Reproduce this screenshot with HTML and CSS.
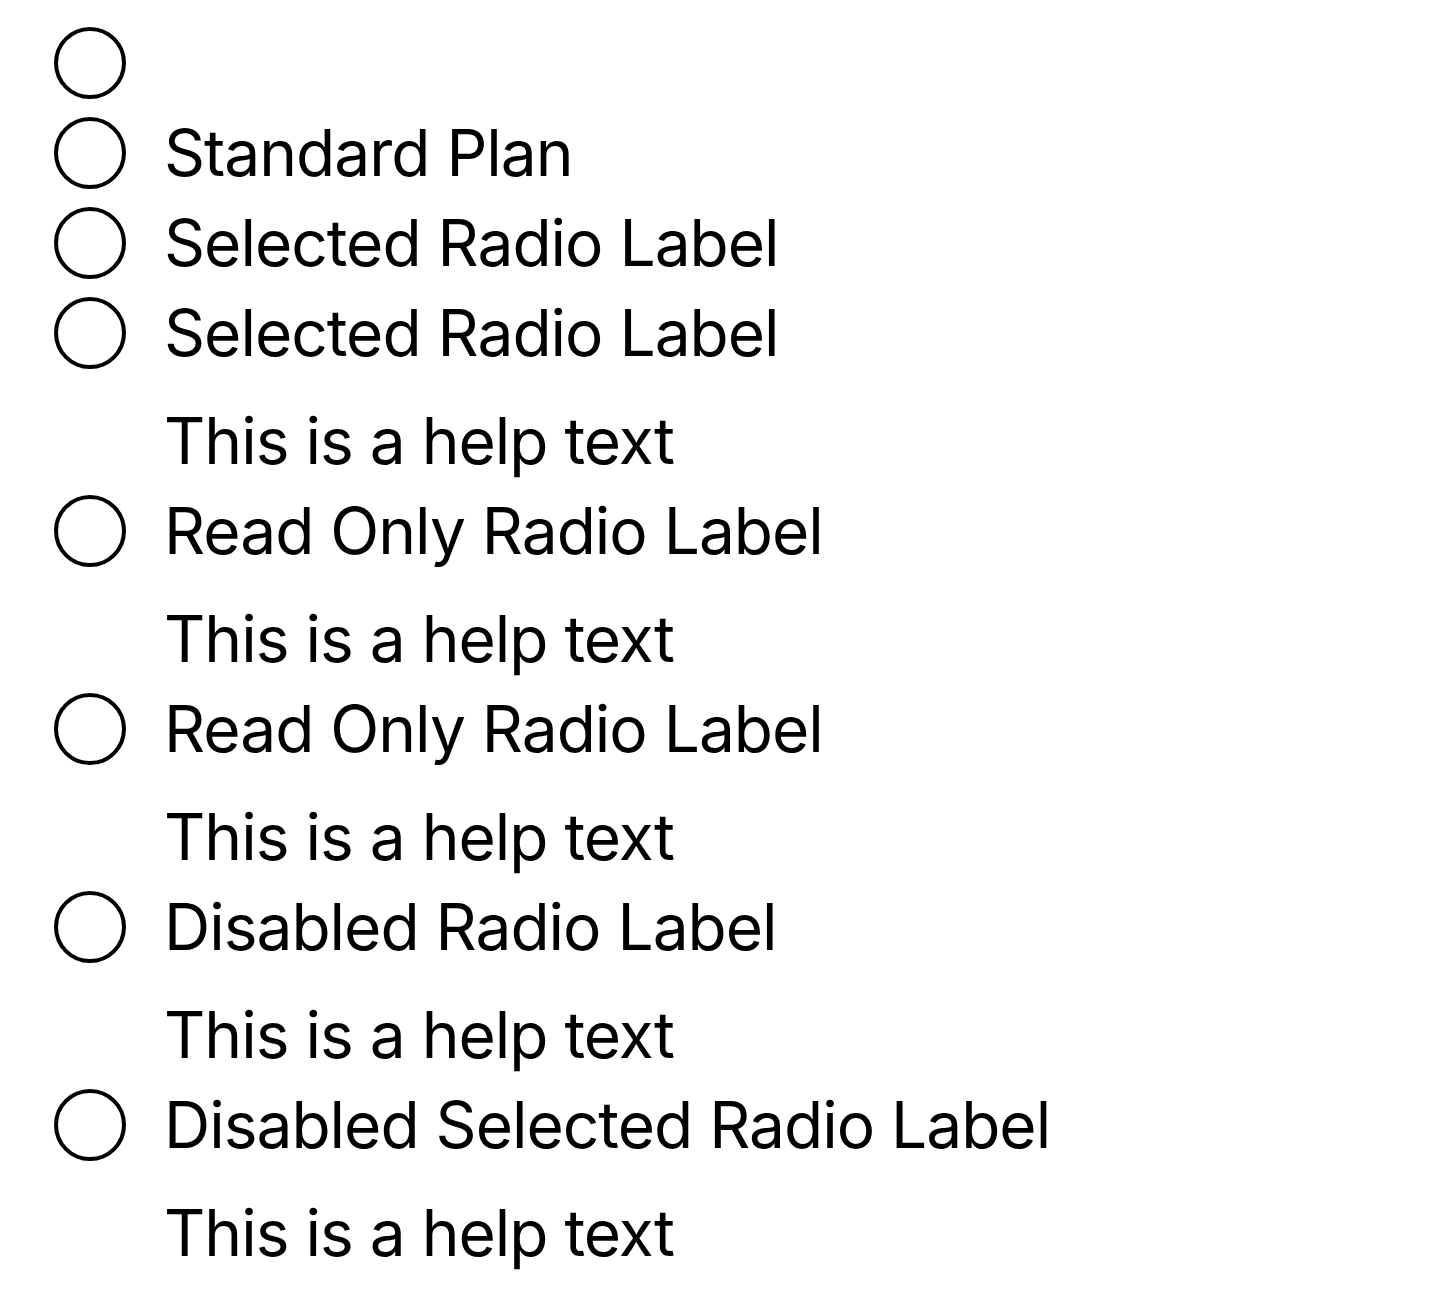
FILE: index.html
```html
<!DOCTYPE html>
<html lang="en">
<head>
<meta charset="utf-8">
<title>Radio group</title>
<link rel="stylesheet" href="styles.css">
</head>
<body>
<div class="radio-group">
  <div class="radio-item">
    <label class="radio-row"><span class="radio"></span></label>
  </div>
  <div class="radio-item">
    <label class="radio-row"><span class="radio"></span><span class="label">Standard Plan</span></label>
  </div>
  <div class="radio-item">
    <label class="radio-row"><span class="radio"></span><span class="label">Selected Radio Label</span></label>
  </div>
  <div class="radio-item">
    <label class="radio-row"><span class="radio"></span><span class="label">Selected Radio Label</span></label>
    <div class="help">This is a help text</div>
  </div>
  <div class="radio-item">
    <label class="radio-row"><span class="radio"></span><span class="label">Read Only Radio Label</span></label>
    <div class="help">This is a help text</div>
  </div>
  <div class="radio-item">
    <label class="radio-row"><span class="radio"></span><span class="label">Read Only Radio Label</span></label>
    <div class="help">This is a help text</div>
  </div>
  <div class="radio-item">
    <label class="radio-row"><span class="radio"></span><span class="label">Disabled Radio Label</span></label>
    <div class="help">This is a help text</div>
  </div>
  <div class="radio-item">
    <label class="radio-row"><span class="radio"></span><span class="label">Disabled Selected Radio Label</span></label>
    <div class="help">This is a help text</div>
  </div>
</div>
</body>
</html>
```
FILE: styles.css
```css
html, body {
  margin: 0;
  padding: 0;
  background: #ffffff;
}
body {
  font-family: Inter, "Noto Sans", sans-serif;
  color: #000000;
  font-size: 64px;
  line-height: 90px;
  letter-spacing: -1px;
}
.radio-group {
  display: flex;
  flex-direction: column;
  padding: 18px 0 0 54px;
}
.radio-row {
  display: flex;
  align-items: center;
  height: 90px;
  gap: 38px;
}
.radio {
  width: 72px;
  height: 72px;
  box-sizing: border-box;
  border: 4px solid #000;
  border-radius: 50%;
  flex: none;
}
.label {
  white-space: nowrap;
}
.help {
  margin-top: 18px;
  padding-left: 110px;
  height: 90px;
  white-space: nowrap;
}
```
